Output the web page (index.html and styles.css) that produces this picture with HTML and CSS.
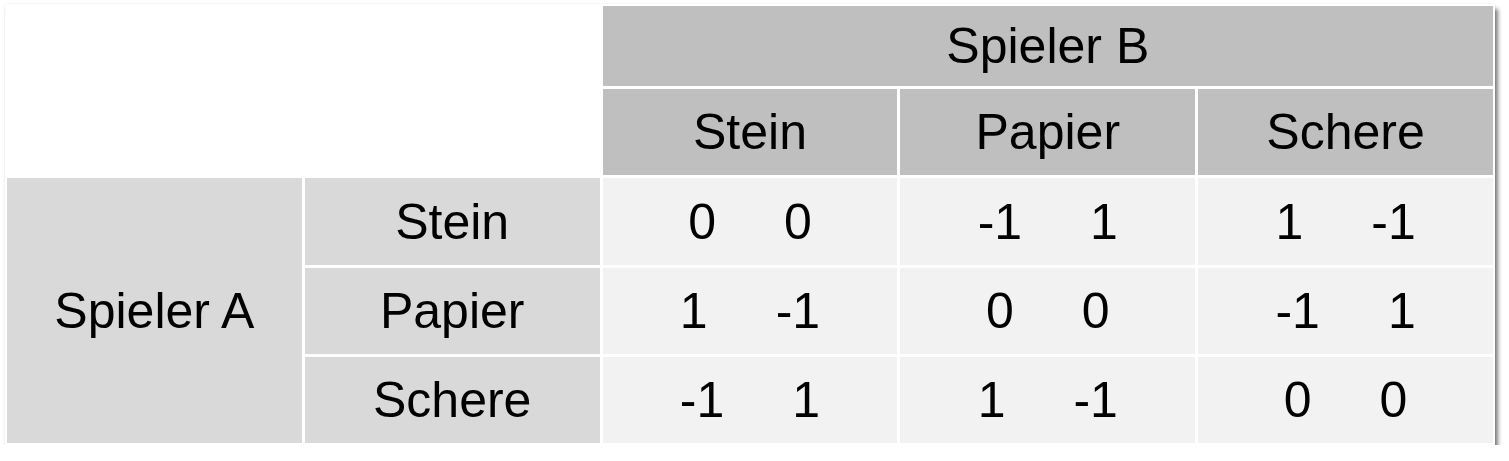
FILE: index.html
```html
<!DOCTYPE html>
<html lang="de">
<head>
<meta charset="utf-8">
<title>Stein Papier Schere</title>
<link rel="stylesheet" href="styles.css">
</head>
<body>
<div class="frame">
  <div class="matrix">
    <div class="corner"></div>
    <div class="cell head player-b">Spieler B</div>
    <div class="cell head">Stein</div>
    <div class="cell head">Papier</div>
    <div class="cell head">Schere</div>

    <div class="cell side player-a">Spieler A</div>
    <div class="cell side">Stein</div>
    <div class="cell body"><span>0</span><span>0</span></div>
    <div class="cell body"><span>-1</span><span>1</span></div>
    <div class="cell body"><span>1</span><span>-1</span></div>

    <div class="cell side">Papier</div>
    <div class="cell body"><span>1</span><span>-1</span></div>
    <div class="cell body"><span>0</span><span>0</span></div>
    <div class="cell body"><span>-1</span><span>1</span></div>

    <div class="cell side">Schere</div>
    <div class="cell body"><span>-1</span><span>1</span></div>
    <div class="cell body"><span>1</span><span>-1</span></div>
    <div class="cell body"><span>0</span><span>0</span></div>
  </div>
</div>
</body>
</html>
```
FILE: styles.css
```css
html, body {
  margin: 0;
  padding: 0;
  background: #ffffff;
}

body {
  font-family: "Liberation Sans", Arial, sans-serif;
  color: #000000;
}

.frame {
  margin: 4px 0 0 5px;
  width: 1486px;
  padding: 2px;
  background: #ffffff;
  box-shadow: 3px 5px 4px rgba(0, 0, 0, 0.5), 0 0 2px rgba(0, 0, 0, 0.08);
}

.matrix {
  display: grid;
  grid-template-columns: repeat(5, 1fr);
  grid-template-rows: 80px 86px 87px 86px 86px;
  gap: 3px;
}

.corner {
  grid-column: 1 / 3;
  grid-row: 1 / 3;
  background: #ffffff;
}

.cell {
  display: flex;
  align-items: center;
  justify-content: center;
  font-size: 50px;
  line-height: 1;
}

.head {
  background: #bfbfbf;
}

.player-b {
  grid-column: 3 / 6;
}

.side {
  background: #d9d9d9;
}

.player-a {
  grid-row: 3 / 6;
}

.body {
  background: #f2f2f2;
  gap: 68px;
}
```
